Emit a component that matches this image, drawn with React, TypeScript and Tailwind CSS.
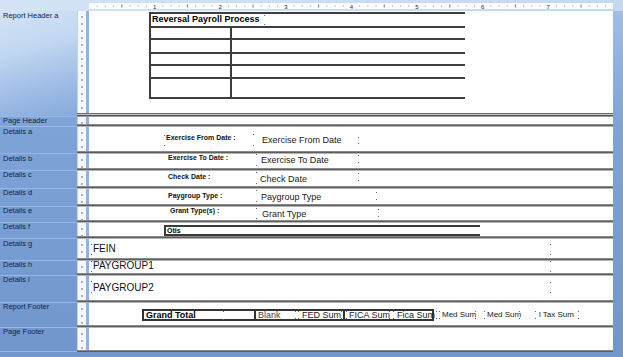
import React from "react";

function M({ className = "" }: { className?: string }) {
  return (
    <span className={"flex w-[2px] shrink-0 flex-col justify-between " + className}>
      <span className="block h-[1px] w-[1px] bg-[#6b6b6b]" />
      <span className="block h-[1px] w-[1px] bg-[#6b6b6b]" />
    </span>
  );
}

function Ruler() {
  const ticks: React.ReactNode[] = [];
  for (let i = 1; i < 64; i++) {
    const x = i * 8.2;
    if (i % 8 === 0)
      ticks.push(
        <text key={i} x={x} y={5.6} fontSize={6} textAnchor="middle" fill="#2b2b2b" fontFamily="Liberation Sans, Arial, sans-serif">
          {i / 8}
        </text>
      );
    else if (i % 4 === 0) ticks.push(<rect key={i} x={x - 0.5} y={1.5} width={1} height={3} fill="#7a7a7a" />);
    else ticks.push(<rect key={i} x={x - 0.5} y={2.5} width={1} height={1} fill="#8f8f8f" />);
  }
  return (
    <svg width="524" height="6" viewBox="0 0 524 6" className="block">
      <rect width="524" height="6" fill="#fbfcfe" />
      {ticks}
    </svg>
  );
}

const SEP_STD = "h-[3px] shrink-0 bg-[linear-gradient(180deg,#8a8a8a_0_1px,#5e5e5e_1px_2px,#b4b4b4_2px_3px)]";
const SEP_THICK = "h-[4px] shrink-0 bg-[linear-gradient(180deg,#6e6e6e_0_1px,#c4c4c4_1px_2px,#555555_2px_3px,#9a9a9a_3px_4px)]";
const SEP_END = "h-[2px] shrink-0 bg-[linear-gradient(180deg,#8a8a8a_0_1px,#5e5e5e_1px_2px)]";

function Row({
  label,
  labelCls = "",
  h,
  sep = SEP_STD,
  children,
}: {
  label: string;
  labelCls?: string;
  h: string;
  sep?: string;
  children?: React.ReactNode;
}) {
  return (
    <div className="flex shrink-0">
      <div
        className={
          "w-[77px] shrink-0 border-b border-[#9ab7e1] px-[3px] text-[7.5px] leading-[8px] whitespace-nowrap text-[#0f2548] " +
          labelCls
        }
      >
        {label}
      </div>
      <div className="flex w-[536px] shrink-0 flex-col">
        <div className={"flex " + h}>
          <div className="w-[9px] shrink-0 border-l border-[#c3d2e8] bg-[#f4f7fb] bg-[linear-gradient(180deg,transparent_5px,#b2b2b2_5px)] bg-[length:2px_7px] bg-[position:3px_0] bg-repeat-y" />
          <div className="w-[3px] shrink-0 bg-[#8fb3e3]" />
          <div className="min-w-0 flex-1 overflow-hidden bg-white">{children}</div>
        </div>
        <div className={sep} />
      </div>
      <div className="w-[10px] shrink-0" />
    </div>
  );
}

const LBL = "text-[7px] font-bold leading-[8px] whitespace-nowrap text-[#111]";
const VAL = "text-[9px] leading-[10px] whitespace-nowrap text-[#1a1a1a]";
const BIG = "text-[10px] leading-[11px] whitespace-nowrap text-[#111]";

export default function App() {
  return (
    <div className="flex h-[357px] w-[623px] flex-col overflow-hidden bg-[linear-gradient(180deg,#a3c0e8_0%,#7ea3d7_35%,#7196cc_100%)] font-['Liberation_Sans',Arial,sans-serif]">
      <div className="flex h-[11px] shrink-0 bg-[linear-gradient(90deg,#d4e3f6,#c4d8f1)] pl-[89px] pt-[3px]">
        <Ruler />
      </div>

      {/* Report Header a */}
      <Row
        label="Report Header a"
        labelCls="pt-[1px] bg-[linear-gradient(165deg,#d3e3f6_0%,#c2d7f1_35%,#9fbde6_70%,#86aadb_100%)]"
        h="h-[102px]"
        sep={SEP_THICK}
      >
        <div className="ml-[60px] mt-[1px] flex w-[316px] flex-col border-l-2 border-[#3e3e3e]">
          <div className="flex h-[14px] items-start border-t-2 border-[#3e3e3e] pl-[1px]">
            <span className="text-[9px] font-bold leading-[10px] whitespace-nowrap text-black">Reversal Payroll Process</span>
            <M className="ml-[4px] mt-[1px] h-[10px]" />
          </div>
          <div className="flex h-[12px] border-t-2 border-[#3e3e3e]">
            <div className="w-[81px] border-r-2 border-[#3e3e3e]" />
          </div>
          <div className="flex h-[14px] border-t-2 border-[#3e3e3e]">
            <div className="w-[81px] border-r-2 border-[#3e3e3e]" />
          </div>
          <div className="flex h-[12px] border-t-2 border-[#3e3e3e]">
            <div className="w-[81px] border-r-2 border-[#3e3e3e]" />
          </div>
          <div className="flex h-[13px] border-t-2 border-[#3e3e3e]">
            <div className="w-[81px] border-r-2 border-[#3e3e3e]" />
          </div>
          <div className="flex h-[22px] border-y-2 border-[#3e3e3e]">
            <div className="w-[81px] border-r-2 border-[#3e3e3e]" />
          </div>
        </div>
      </Row>

      <Row label="Page Header" h="h-[7px]" />

      {/* Details a */}
      <Row label="Details a" labelCls="pt-[1px]" h="h-[24px]">
        <div className="flex h-full items-start">
          <M className="ml-[75px] mt-[8px] h-[11px]" />
          <span className={"mt-[7px] w-[87px] " + LBL}>Exercise From Date :</span>
          <M className="mt-[7px] h-[12px]" />
          <span className={"ml-[7px] mt-[8px] w-[96px] " + VAL}>Exercise From Date</span>
          <M className="mt-[10px] h-[7px]" />
        </div>
      </Row>

      {/* Details b */}
      <Row label="Details b" labelCls="pt-[1px]" h="h-[14px]">
        <div className="flex h-full items-start">
          <span className={"ml-[79px] mt-[0px] w-[88px] " + LBL}>Exercise To Date :</span>
          <M className="mt-[0px] h-[12px]" />
          <span className={"ml-[3px] mt-[1px] w-[97px] " + VAL}>Exercise To Date</span>
          <M className="mt-[1px] h-[8px]" />
        </div>
      </Row>

      {/* Details c */}
      <Row label="Details c" h="h-[15px]">
        <div className="flex h-full items-start">
          <span className={"ml-[79px] mt-[2px] w-[88px] " + LBL}>Check Date :</span>
          <M className="mt-[1px] h-[12px]" />
          <span className={"ml-[2px] mt-[3px] w-[98px] " + VAL}>Check Date</span>
          <M className="mt-[2px] h-[8px]" />
        </div>
      </Row>

      {/* Details d */}
      <Row label="Details d" h="h-[15px]">
        <div className="flex h-full items-start">
          <span className={"ml-[79px] mt-[3px] w-[88px] " + LBL}>Paygroup Type :</span>
          <M className="mt-[1px] h-[12px]" />
          <span className={"ml-[3px] mt-[3px] w-[115px] " + VAL}>Paygroup Type</span>
          <M className="mt-[3px] h-[8px]" />
        </div>
      </Row>

      {/* Details e */}
      <Row label="Details e" h="h-[13px]">
        <div className="flex h-full items-start">
          <span className="ml-[81px] mt-[0px] w-[86px] text-[7px] font-bold leading-[7px] whitespace-nowrap text-[#111]">
            Grant Type(s) :
          </span>
          <M className="mt-[1px] h-[11px]" />
          <span className={"ml-[4px] mt-[2px] w-[116px] " + VAL}>Grant Type</span>
          <M className="mt-[2px] h-[8px]" />
        </div>
      </Row>

      {/* Details f */}
      <Row label="Details f" h="h-[13px]">
        <div className="ml-[75px] mt-[2px] flex h-[11px] w-[316px] items-center border-y-2 border-l-2 border-[#3a3a3a] pl-[1px]">
          <span className="text-[7px] font-bold leading-[7px] text-black">Otis</span>
        </div>
      </Row>

      {/* Details g */}
      <Row label="Details g" labelCls="pt-[1px]" h="h-[19px]">
        <div className="flex h-full items-start">
          <M className="ml-[2px] mt-[5px] h-[11px]" />
          <span className={"mt-[4px] w-[457px] " + BIG}>FEIN</span>
          <M className="mt-[5px] h-[11px]" />
        </div>
      </Row>

      {/* Details h */}
      <Row label="Details h" h="h-[12px]">
        <div className="flex h-full items-start">
          <M className="ml-[2px] mt-[0px] h-[11px]" />
          <span className="mt-[0px] w-[457px] text-[10px] leading-[10px] whitespace-nowrap text-[#111]">PAYGROUP1</span>
          <M className="mt-[0px] h-[11px]" />
        </div>
      </Row>

      {/* Details i */}
      <Row label="Details i" h="h-[24px]">
        <div className="flex h-full items-start">
          <M className="ml-[2px] mt-[5px] h-[12px]" />
          <span className={"mt-[6px] w-[457px] " + BIG}>PAYGROUP2</span>
          <M className="mt-[6px] h-[11px]" />
        </div>
      </Row>

      {/* Report Footer */}
      <Row label="Report Footer" h="h-[22px]">
        <div className="ml-[53px] mt-[6px] flex h-[12px] items-stretch text-[9px] leading-[8px] whitespace-nowrap text-[#1a1a1a]">
          <div className="flex w-[114px] items-center border-2 border-[#333] pl-[2px] font-bold text-black">
            <span className="w-[77px]">Grand Total</span>
            <M className="h-[9px]" />
          </div>
          <div className="flex w-[44px] items-center border-y-2 border-[#333] pl-[2px] text-[#444]">
            <span className="w-[37px]">Blank</span>
            <M className="h-[8px]" />
            <M className="ml-[1px] h-[8px]" />
          </div>
          <div className="flex w-[45px] items-center border-y-2 border-r-2 border-[#333] pl-[2px]">
            <span className="w-[39px]">FED Sum</span>
            <M className="h-[8px]" />
          </div>
          <div className="flex w-[89px] items-center border-y-2 border-r-2 border-[#333] pl-[1px]">
            <M className="h-[8px]" />
            <span className="ml-[1px] w-[40px]">FICA Sum</span>
            <M className="h-[8px]" />
            <M className="ml-[2px] h-[8px]" />
            <span className="ml-[2px]">Fica Sum</span>
          </div>
          <div className="flex items-center text-[8px]">
            <M className="ml-[2px] h-[8px]" />
            <M className="ml-[1px] h-[8px]" />
            <span className="ml-[1px] w-[33px]">Med Sum</span>
            <M className="h-[8px]" />
            <M className="ml-[7px] h-[8px]" />
            <span className="ml-[1px] w-[32px]">Med Sum</span>
            <M className="h-[8px]" />
            <M className="ml-[14px] h-[8px]" />
            <span className="ml-[2px] w-[39px]">l Tax Sum</span>
            <M className="h-[8px]" />
          </div>
        </div>
      </Row>

      {/* Page Footer */}
      <Row label="Page Footer" h="h-[22px]" sep={SEP_END} />

      <div className="h-[5px] shrink-0" />
    </div>
  );
}
